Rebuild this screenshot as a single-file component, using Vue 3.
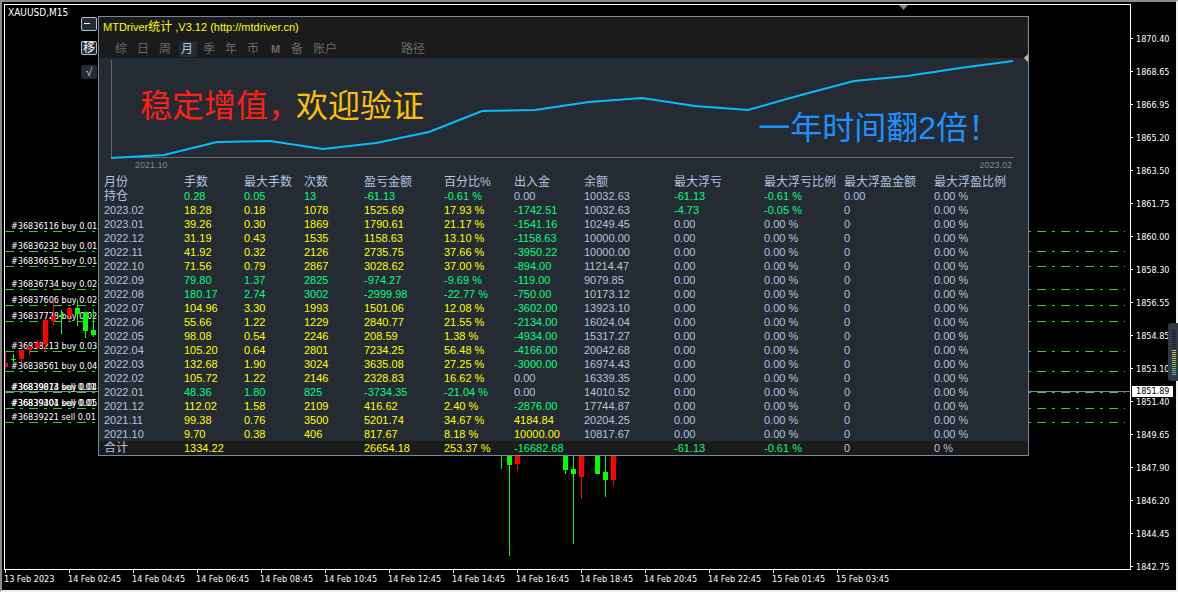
<template>
  <div class="terminal">
    <main class="plot">
      <svg class="canvas" aria-hidden="true">
        <g transform="translate(-5 -5)">
          <g class="orders">
            <line v-for="y in orderLines" :key="y" x1="5" x2="100%" :y1="y + 0.5" :y2="y + 0.5" />
          </g>
          <line class="bid" x1="5" x2="101%" y1="391.5" y2="391.5" />
          <text v-for="order in orders" :key="order.text" class="order-text" x="11" :y="order.y - 2">{{ order.text }}</text>
          <g v-for="candle in candles" :key="candle.x" :class="candle.up ? 'up' : 'down'">
            <rect :x="candle.x" :y="candle.high" width="1" :height="candle.low - candle.high" />
            <rect :x="candle.x - 2" :y="candle.top" width="5" :height="candle.bottom - candle.top" />
          </g>
          <path class="shift-mark" d="M899 5h9l-4.500 5z" />
        </g>
      </svg>

      <span class="symbol">XAUUSD,M15</span>

      <div class="tools">
        <button type="button" class="tool framed" aria-label="收起">
          <svg width="14" height="12" aria-hidden="true"><rect x="2" y="5" width="6" height="1" /></svg>
        </button>
        <button type="button" class="tool framed">移</button>
        <button type="button" class="tool">√</button>
      </div>

      <section class="panel">
        <header class="panel-head">
          <h1 class="title">MTDriver<span class="cn">统计</span> ,V3.12 (http://mtdriver.cn)</h1>
          <nav class="tabs">
            <button v-for="tab in tabs" :key="tab" type="button"
              class="tab"
              :class="{ active: tab === current, wide: tab.length > 1, latin: tab === 'M' }"
              @click="current = tab"
            >{{ tab }}</button>
            <button type="button" class="tab wide path">路径</button>
          </nav>
        </header>

        <div class="growth">
          <svg class="growth-chart" viewBox="0 0 903 101" preserveAspectRatio="none" aria-hidden="true">
            <path class="axis" d="M0.500 0V97.500H903" />
            <polyline class="curve" :points="curve" />
          </svg>
          <div class="range"><span>2021.10</span><span>2023.02</span></div>
          <p class="caption left"><span class="red">稳定增值，</span><span class="gold">欢迎验证</span></p>
          <p class="caption right">一年时间翻2倍！</p>
          <svg class="side-mark" width="4" height="8" aria-hidden="true"><path d="M4 0v8l-4-4z" /></svg>
        </div>

        <table class="stats">
          <colgroup>
            <col v-for="(width, i) in widths" :key="i" :class="'w' + width" />
          </colgroup>
          <thead>
            <tr><th v-for="name in columns" :key="name" scope="col">{{ name }}</th></tr>
          </thead>
          <tbody>
            <tr v-for="row in rows" :key="row[0]">
              <td v-for="(cell, i) in row" :key="i" :class="tone(cell, i, row)">{{ cell }}</td>
            </tr>
          </tbody>
          <tfoot>
            <tr><td v-for="(cell, i) in total" :key="i" :class="tone(cell, i, total)">{{ cell }}</td></tr>
          </tfoot>
        </table>
      </section>
    </main>

    <aside class="prices">
      <ol>
        <li v-for="price in prices" :key="price">{{ price }}</li>
      </ol>
      <span class="bid-price">1851.89</span>
    </aside>

    <footer class="times">
      <span v-for="time in times" :key="time">{{ time }}</span>
    </footer>

    <div class="meter"><i class="off"></i><i class="on"></i></div>
  </div>
</template>

<script setup>
  import { ref } from 'vue';

  const current = ref('月');
  const tabs = ['综', '日', '周', '月', '季', '年', '币', 'M', '备', '账户'];

  const columns = ['月份', '手数', '最大手数', '次数', '盈亏金额', '百分比%', '出入金', '余额', '最大浮亏', '最大浮亏比例', '最大浮盈金额', '最大浮盈比例'];
  const widths = [85, 60, 60, 60, 80, 70, 70, 90, 90, 80, 90, 'rest'];

  const flat = ['0.00', '0.00 %', '0', '0.00 %'];

  const rows = [
    ['持仓', '0.28', '0.05', '13', '-61.13', '-0.61 %', '0.00', '10032.63', '-61.13', '-0.61 %', '0.00', '0.00 %'],
    ['2023.02', '18.28', '0.18', '1078', '1525.69', '17.93 %', '-1742.51', '10032.63', '-4.73', '-0.05 %', '0', '0.00 %'],
    ['2023.01', '39.26', '0.30', '1869', '1790.61', '21.17 %', '-1541.16', '10249.45', ...flat],
    ['2022.12', '31.19', '0.43', '1535', '1158.63', '13.10 %', '-1158.63', '10000.00', ...flat],
    ['2022.11', '41.92', '0.32', '2126', '2735.75', '37.66 %', '-3950.22', '10000.00', ...flat],
    ['2022.10', '71.56', '0.79', '2867', '3028.62', '37.00 %', '-894.00', '11214.47', ...flat],
    ['2022.09', '79.80', '1.37', '2825', '-974.27', '-9.69 %', '-119.00', '9079.85', ...flat],
    ['2022.08', '180.17', '2.74', '3002', '-2999.98', '-22.77 %', '-750.00', '10173.12', ...flat],
    ['2022.07', '104.96', '3.30', '1993', '1501.06', '12.08 %', '-3602.00', '13923.10', ...flat],
    ['2022.06', '55.66', '1.22', '1229', '2840.77', '21.55 %', '-2134.00', '16024.04', ...flat],
    ['2022.05', '98.08', '0.54', '2246', '208.59', '1.38 %', '-4934.00', '15317.27', ...flat],
    ['2022.04', '105.20', '0.64', '2801', '7234.25', '56.48 %', '-4166.00', '20042.68', ...flat],
    ['2022.03', '132.68', '1.90', '3024', '3635.08', '27.25 %', '-3000.00', '16974.43', ...flat],
    ['2022.02', '105.72', '1.22', '2146', '2328.83', '16.62 %', '0.00', '16339.35', ...flat],
    ['2022.01', '48.36', '1.80', '825', '-3734.35', '-21.04 %', '0.00', '14010.52', ...flat],
    ['2021.12', '112.02', '1.58', '2109', '416.62', '2.40 %', '-2876.00', '17744.87', ...flat],
    ['2021.11', '99.38', '0.76', '3500', '5201.74', '34.67 %', '4184.84', '20204.25', ...flat],
    ['2021.10', '9.70', '0.38', '406', '817.67', '8.18 %', '10000.00', '10817.67', ...flat]
  ];
  const total = ['合计', '1334.22', '', '', '26654.18', '253.37 %', '-16682.68', '', '-61.13', '-0.61 %', '0', '0 %'];

  // lots, count and percent follow the sign of the row's profit
  const tone = (cell, i, row) => {
    if (i === 0 || i === 7) return null;
    const value = parseFloat(i < 6 ? row[4] : cell);
    if (value > 0) return 'gain';
    return value < 0 ? 'loss' : null;
  };

  // height of the growth line at each month, from the top of the chart
  const levels = [98, 95, 82, 81, 89, 83, 72, 51, 50, 42, 38, 46, 50, 35, 21, 16, 8, 1];
  const curve = levels.map((y, i) => `${Math.round(i * 902 / 17)},${y}`).join(' ');

  const orderLines = [231, 251, 266, 289, 305, 321, 351, 371, 392, 408, 422];
  const orders = [
    { y: 231, text: '#36836116 buy 0.01' },
    { y: 251, text: '#36836232 buy 0.01' },
    { y: 266, text: '#36836635 buy 0.01' },
    { y: 289, text: '#36836734 buy 0.02' },
    { y: 305, text: '#36837606 buy 0.02' },
    { y: 321, text: '#36837728 buy 0.02' },
    { y: 351, text: '#36838213 buy 0.03' },
    { y: 371, text: '#36838561 buy 0.04' },
    { y: 392, text: '#36839074 buy 0.04' },
    { y: 392, text: '#36839813 sell 0.01' },
    { y: 408, text: '#36839404 buy 0.05' },
    { y: 408, text: '#36839301 sell 0.01' },
    { y: 422, text: '#36839221 sell 0.01' }
  ];

  const bar = (x, up, high, low, top, bottom) => ({ x, up, high, low, top, bottom });
  const candles = [
    bar(5, false, 352, 369, 363, 367),
    bar(13, true, 354, 362, 359, 360),
    bar(21, false, 350, 363, 350, 359),
    bar(29, false, 346, 355, 347, 350),
    bar(37, false, 340, 350, 343, 348),
    bar(45, false, 319, 352, 320, 344),
    bar(53, false, 299, 325, 316, 321),
    bar(61, true, 310, 334, 315, 317),
    bar(69, false, 307, 321, 308, 316),
    bar(77, true, 300, 326, 308, 314),
    bar(85, true, 312, 338, 312, 331),
    bar(93, true, 309, 337, 330, 335),
    bar(501, true, 440, 469, 440, 450),
    bar(509, true, 440, 556, 440, 465),
    bar(517, false, 440, 471, 440, 464),
    bar(565, true, 440, 474, 440, 470),
    bar(573, true, 440, 544, 469, 474),
    bar(581, false, 440, 499, 440, 477),
    bar(597, true, 440, 474, 440, 474),
    bar(605, true, 440, 497, 472, 480),
    bar(613, false, 440, 486, 440, 480)
  ];

  const prices = ['1870.40', '1868.65', '1866.95', '1865.20', '1863.50', '1861.75', '1860.00', '1858.30', '1856.55', '1854.85', '1853.10', '1851.40', '1849.65', '1847.90', '1846.20', '1844.45', '1842.75'];
  const times = ['13 Feb 2023', '14 Feb 02:45', '14 Feb 04:45', '14 Feb 06:45', '14 Feb 08:45', '14 Feb 10:45', '14 Feb 12:45', '14 Feb 14:45', '14 Feb 16:45', '14 Feb 18:45', '14 Feb 20:45', '14 Feb 22:45', '15 Feb 01:45', '15 Feb 03:45'];
</script>

<style>
  body {
    background: #000;
  }
</style>

<style scoped>
  .terminal {
    background: #000;
    border-bottom: 2px solid #f0f0f0;
    border-left: 2px solid #8a8a8a;
    border-right: 2px solid #f0f0f0;
    border-top: 2px solid #8a8a8a;
    box-sizing: border-box;
    color: #fff;
    display: grid;
    font-family: "DejaVu Sans Condensed", "Open Sans", sans-serif;
    font-size: 9px;
    grid-template-columns: 1fr 45px;
    grid-template-rows: 1fr 20px;
    line-height: 12px;
    min-height: 100vh;
    padding: 2px 0 0 2px;
    position: relative;
  }

  .plot {
    align-items: flex-start;
    border: 1px solid #fff;
    display: flex;
    position: relative;
  }

  .canvas {
    height: 100%;
    left: 0;
    position: absolute;
    top: 0;
    width: 100%;
  }

  .orders line {
    stroke: #32cd32;
    stroke-dasharray: 9 6 3 6;
  }

  .bid {
    stroke: #778899;
  }

  .order-text {
    fill: #fff;
  }

  .up {
    fill: #00ff00;
  }

  .down {
    fill: #ff0000;
  }

  .shift-mark {
    fill: #778899;
  }

  .symbol {
    box-sizing: border-box;
    flex: none;
    font-size: 10px;
    padding: 2px 0 0 3px;
    position: relative;
    width: 76px;
  }

  .tools {
    display: flex;
    flex: none;
    flex-direction: column;
    gap: 10px;
    padding-top: 12px;
    position: relative;
    width: 17px;
  }

  .tool {
    align-items: center;
    background: #252b33;
    border: 1px solid #252b33;
    border-radius: 2px;
    box-sizing: border-box;
    color: #b0c4de;
    display: flex;
    font: 12px/12px "Liberation Sans", "Noto Sans CJK SC", sans-serif;
    height: 14px;
    justify-content: center;
    padding: 0;
    width: 16px;
  }

  .framed {
    border-color: #b0c4de;
    color: #fff;
  }

  .framed rect {
    fill: #fff;
  }

  .panel {
    background: #252b33;
    border: 1px solid #778899;
    box-sizing: border-box;
    color: #b0c4de;
    flex: 0 1 931px;
    font-family: "Liberation Sans", "Noto Sans CJK SC", sans-serif;
    font-size: 11px;
    margin-top: 11px;
    position: relative;
  }

  .panel-head {
    background: #1b1b1b;
    height: 41px;
    margin-right: 1px;
  }

  .title {
    color: #ffff00;
    font-size: 11px;
    font-weight: normal;
    line-height: 20px;
    margin: 0;
    padding-left: 4px;
  }

  .cn {
    font-size: 12px;
  }

  .tabs {
    display: flex;
    gap: 4px;
    padding: 4px 0 0 14px;
  }

  .tab {
    background: none;
    border: 0;
    border-radius: 2px;
    color: #696969;
    flex: none;
    font: 12px/16px "Liberation Sans", "Noto Sans CJK SC", sans-serif;
    height: 16px;
    padding: 0 0 0 2px;
    text-align: left;
    width: 18px;
  }

  .wide {
    width: 30px;
  }

  .latin {
    font-size: 11px;
    font-weight: bold;
    padding-left: 4px;
  }

  .active {
    background: #252b33;
    color: #b0c4de;
  }

  .path {
    margin-left: 54px;
  }

  .growth {
    padding: 2px 14px 0 12px;
    position: relative;
  }

  .growth-chart {
    display: block;
    height: 101px;
    overflow: visible;
    width: 100%;
  }

  .axis {
    fill: none;
    stroke: #696969;
  }

  .curve {
    fill: none;
    stroke: #00bfff;
    stroke-width: 2;
  }

  .range {
    color: #778899;
    display: flex;
    font-size: 9px;
    justify-content: space-between;
    line-height: 8px;
    padding: 0 2px 0 24px;
  }

  .caption {
    font-size: 32px;
    line-height: 40px;
    margin: 0;
    position: absolute;
    white-space: nowrap;
  }

  .caption.left {
    left: 41px;
    top: 28px;
  }

  .caption.right {
    color: #1e90ff;
    right: 28px;
    top: 50px;
  }

  .red {
    color: #ff1f14;
  }

  .gold {
    color: #ffc000;
    margin-left: -4px;
  }

  .side-mark {
    fill: #c0c0c0;
    position: absolute;
    right: 0;
    top: -4px;
  }

  .stats {
    border-collapse: collapse;
    line-height: 14px;
    margin-top: 6px;
    table-layout: fixed;
    width: 100%;
  }

  .stats th,
  .stats td {
    font-weight: normal;
    height: 14px;
    line-height: 14px;
    padding: 0;
    text-align: left;
    white-space: nowrap;
  }

  .stats th,
  .stats td:first-child {
    font-size: 12px;
  }

  .stats th:first-child,
  .stats td:first-child {
    padding-left: 5px;
  }

  .stats tbody tr:not(:first-child) td:first-child {
    font-size: 11px;
  }

  .stats tfoot {
    background: #1b1b1b;
  }

  .gain {
    color: #ffff00;
  }

  .loss {
    color: #00ff7f;
  }

  .w60 {
    width: 60px;
  }

  .w70 {
    width: 70px;
  }

  .w80 {
    width: 80px;
  }

  .w85 {
    width: 85px;
  }

  .w90 {
    width: 90px;
  }

  .prices {
    position: relative;
  }

  .prices ol {
    list-style: none;
    margin: 0;
    padding: 18px 0 0;
  }

  .prices li {
    align-items: center;
    display: flex;
    gap: 3px;
    height: 33px;
  }

  .prices li:last-child {
    margin-bottom: -17px;
  }

  .prices li::before {
    background: #fff;
    content: "";
    height: 1px;
    width: 2px;
  }

  .bid-price {
    background: #fff;
    color: #000;
    left: 1px;
    line-height: 11px;
    padding: 0 4px;
    position: absolute;
    top: 382px;
  }

  .times {
    display: flex;
    grid-column: 1 / -1;
    overflow: hidden;
  }

  .times span {
    flex: none;
    white-space: nowrap;
    width: 64px;
  }

  .times span::before {
    background: #fff;
    content: "";
    display: block;
    height: 3px;
    margin-left: 1px;
    width: 1px;
  }

  .meter {
    background: #343846;
    border-radius: 3px 0 0 3px;
    box-sizing: border-box;
    display: flex;
    flex-direction: column;
    height: 58px;
    padding: 7px 2px 0 4px;
    position: absolute;
    right: -2px;
    top: 321px;
    width: 10px;
  }

  .off {
    background: repeating-linear-gradient(#1c1e28 0 1px, #343846 1px 2px);
    height: 20px;
  }

  .on {
    background: repeating-linear-gradient(transparent 0 1px, #343846 1px 2px), linear-gradient(#d8c83c, #7fc85a 50%, #35c8b4);
    height: 26px;
  }
</style>
